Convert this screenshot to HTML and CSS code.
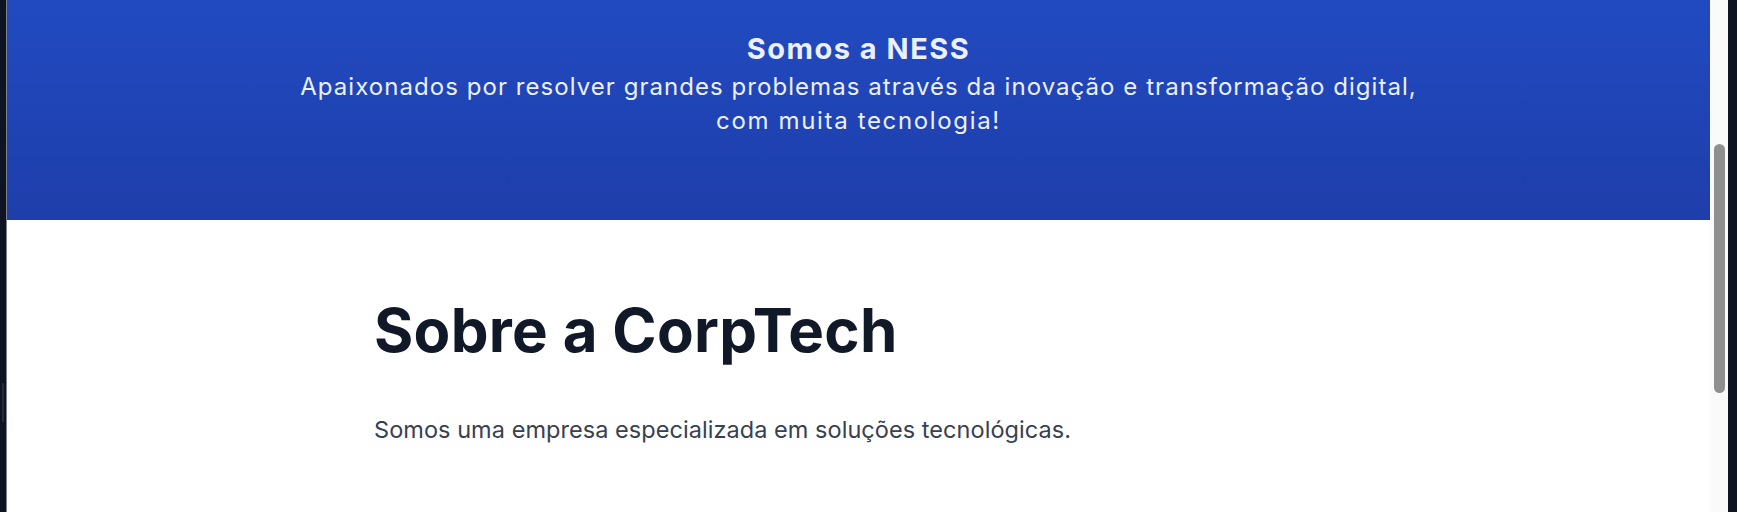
FILE: index.html
```html
<!DOCTYPE html>
<html lang="pt-BR">
<head>
<meta charset="utf-8">
<title>Sobre a CorpTech</title>
<link rel="stylesheet" href="styles.css">
</head>
<body>
<div class="frame">
  <div class="edge-left"><span class="edge-mark"></span></div>
  <main class="page">
    <section class="hero">
      <h2 class="hero-title">Somos a NESS</h2>
      <p class="hero-text">Apaixonados por resolver grandes problemas através da inovação e transformação digital,<br><span class="hero-text-end">com muita tecnologia!</span></p>
    </section>
    <section class="about">
      <div class="about-inner">
        <h1 class="about-title">Sobre a CorpTech</h1>
        <p class="about-text">Somos uma empresa especializada em soluções tecnológicas.</p>
      </div>
    </section>
  </main>
  <div class="scrollbar"><span class="scrollbar-thumb"></span></div>
  <div class="edge-right"></div>
</div>
</body>
</html>
```
FILE: styles.css
```css
html, body {
  margin: 0;
  padding: 0;
  height: 100%;
  overflow: hidden;
  background: #0f1422;
}

.frame {
  display: flex;
  height: 512px;
  width: 1737px;
}

.edge-left {
  width: 6px;
  flex: none;
  background: #0f1422;
  border-right: 1px solid #7c808a;
  display: flex;
  flex-direction: column;
}

.edge-mark {
  display: block;
  width: 2px;
  height: 39px;
  margin: 383px 0 0 2px;
  background: #272c37;
}

.page {
  flex: none;
  width: 1703px;
  background: #ffffff;
  font-family: Inter, "Noto Sans", sans-serif;
}

.hero {
  height: 220px;
  box-sizing: border-box;
  padding-top: 31px;
  background: linear-gradient(to bottom, #214ac1, #1e3eaa);
  text-align: center;
  color: #eceffd;
}

.hero-title {
  margin: 0 0 3px;
  font-size: 29px;
  line-height: 36px;
  font-weight: 700;
  letter-spacing: 1.5px;
}

.hero-text {
  margin: 0;
  font-size: 24px;
  line-height: 33.5px;
  font-weight: 400;
  letter-spacing: 1.05px;
}

.hero-text-end {
  letter-spacing: 1.65px;
}

.about {
  padding-top: 74px;
}

.about-inner {
  width: 969px;
  margin: 0 auto;
}

.about-title {
  margin: 0 0 48px;
  font-size: 60px;
  line-height: 72px;
  font-weight: 700;
  color: #111827;
  letter-spacing: 0.3px;
}

.about-text {
  margin: 0;
  font-size: 23.5px;
  line-height: 32px;
  color: #374151;
  letter-spacing: 0.05px;
}

.scrollbar {
  flex: none;
  width: 18px;
  background: #fafafa;
  display: flex;
  flex-direction: column;
}

.scrollbar-thumb {
  display: block;
  width: 11px;
  height: 249px;
  margin: 144px 0 0 4px;
  border-radius: 6px;
  background: #8f8f8f;
}

.edge-right {
  flex: none;
  width: 9px;
  background: #0f1422;
}
```
